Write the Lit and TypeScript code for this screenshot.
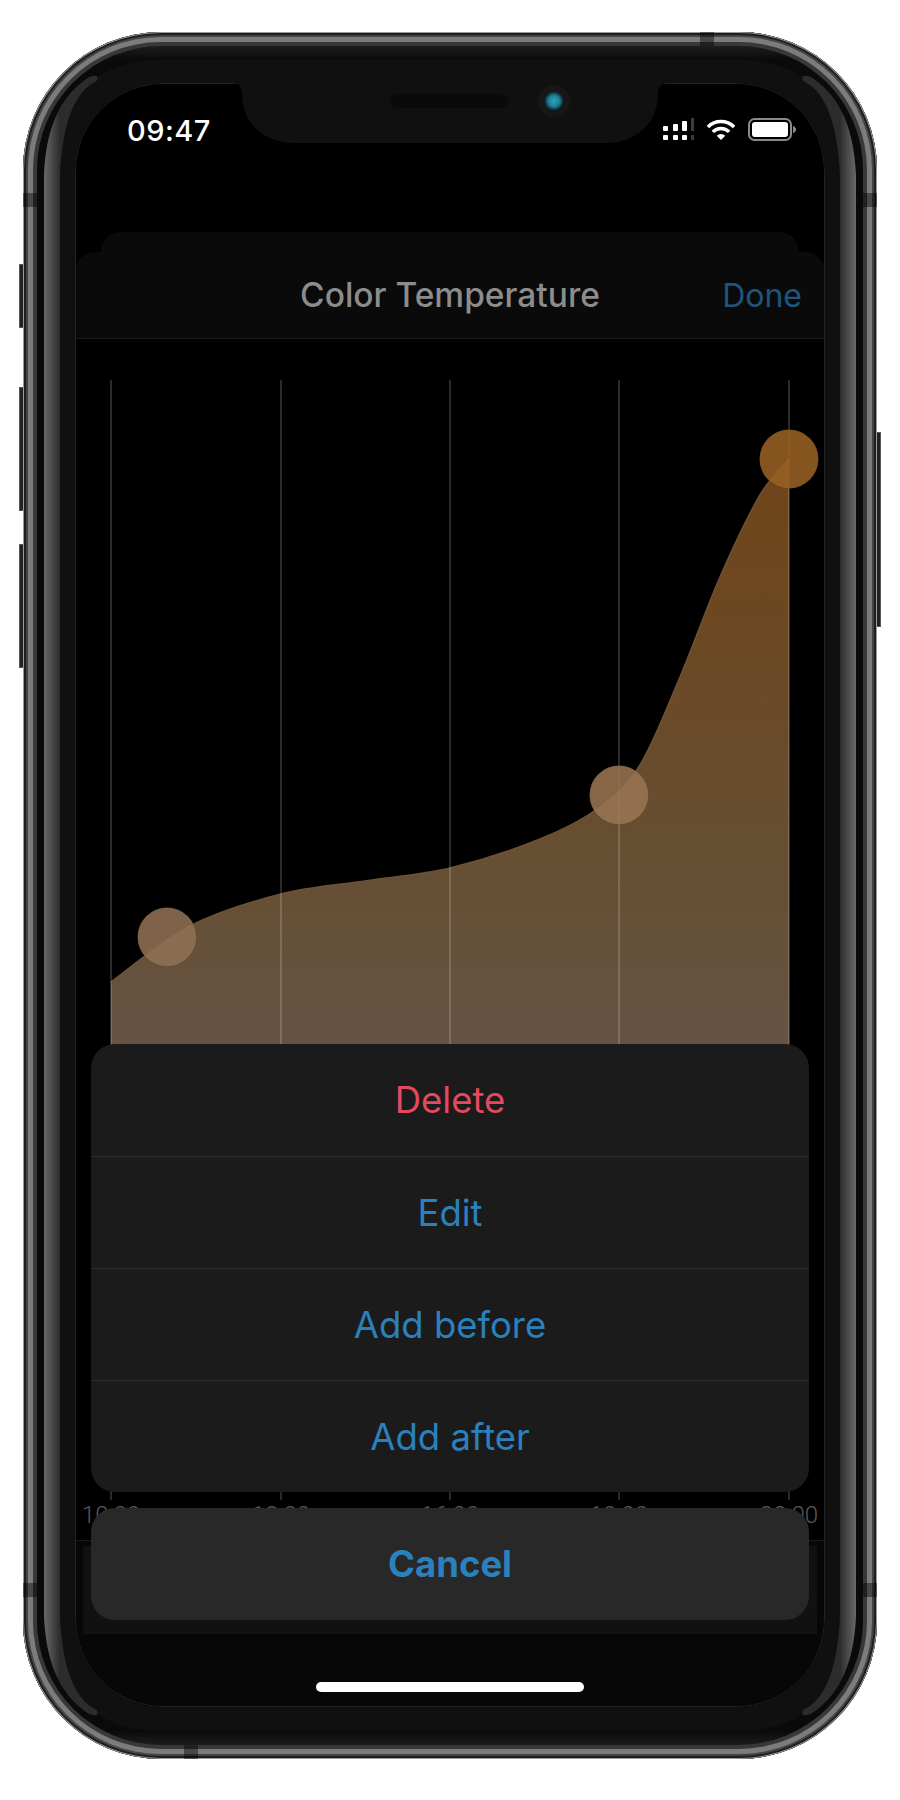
import { LitElement, html, css, svg } from "lit";
import { customElement } from "lit/decorators.js";

type Pt = [number, number];

// curve and grid are in page pixels, the chart svg's viewBox is offset to match
const CURVE: Pt[] = [
  [111, 982], [190, 926], [281, 894], [365, 881], [450, 868], [540, 839],
  [600, 807], [640, 765], [680, 677], [720, 577], [760, 495], [789, 459],
];
const GRID = [111, 281, 450, 619, 789];
const LABELS = ["10:00", "13:00", "16:00", "19:00", "22:00"];
const POINTS = [
  { x: 167, y: 937, fill: "#8f6f53" },
  { x: 619, y: 795, fill: "#987451" },
  { x: 789, y: 459, fill: "#996123" },
];

function smooth(pts: Pt[]) {
  let d = `M${pts[0][0]} ${pts[0][1]}`;
  for (let i = 0; i < pts.length - 1; i++) {
    const p0 = pts[Math.max(i - 1, 0)];
    const p1 = pts[i];
    const p2 = pts[i + 1];
    const p3 = pts[Math.min(i + 2, pts.length - 1)];
    const c1 = [p1[0] + (p2[0] - p0[0]) / 6, p1[1] + (p2[1] - p0[1]) / 6];
    const c2 = [p2[0] - (p3[0] - p1[0]) / 6, p2[1] - (p3[1] - p1[1]) / 6];
    d += ` C${c1[0]} ${c1[1]} ${c2[0]} ${c2[1]} ${p2[0]} ${p2[1]}`;
  }
  return d;
}

@customElement("app-root")
export class AppRoot extends LitElement {
  static override styles = css`
    :host {
      display: block;
      box-sizing: border-box;
      height: 1800px;
      padding: 32px 23px 0;
      background: #fff;
      font-family: Inter, "Liberation Sans", sans-serif;
    }
    .phone {
      position: relative;
      box-sizing: border-box;
      width: 854px;
      height: 1727px;
      padding: 14px;
      border-radius: 138px;
      background: #333;
      box-shadow: inset 0 0 0 1px #9a9a9a, inset 0 0 0 3px #1e1e1e,
        inset 0 0 0 5px #444, inset 0 0 0 10px #7c7c7c, inset 0 0 0 14px #383838;
    }
    .rim {
      height: 100%;
      box-sizing: border-box;
      padding: 14px 7px;
      border-radius: 124px;
      background: linear-gradient(#1d1d1d, #0a0a0a 14px, #0a0a0a calc(100% - 14px), #1d1d1d);
    }
    .bezel {
      height: 100%;
      box-sizing: border-box;
      padding: 23px 31px 24px;
      border-radius: 112px;
      background: #101010;
    }
    .screen {
      position: relative;
      display: flex;
      flex-direction: column;
      height: 1624px;
      border-radius: 88px;
      overflow: hidden;
      background: #000;
    }
    .screen::after {
      content: "";
      position: absolute;
      inset: 0;
      border: 1px solid #222;
      border-radius: 88px;
      pointer-events: none;
    }
    .strips {
      position: absolute;
      inset: 0;
      pointer-events: none;
    }
    .side-btn {
      position: absolute;
      left: -4px;
      width: 4px;
      box-sizing: border-box;
      background: #222;
      border: 1px solid #555;
      border-right: none;
    }
    .side-btn.right {
      left: auto;
      right: -4px;
      border: 1px solid #555;
      border-left: none;
    }
    .b1 { top: 232px; height: 64px; }
    .b2 { top: 355px; height: 124px; }
    .b3 { top: 512px; height: 124px; }
    .b4 { top: 400px; height: 195px; }
    .band {
      position: absolute;
      background: rgba(0, 0, 0, 0.42);
    }
    .band.v { width: 14px; height: 14px; }
    .b-lt { left: 0; top: 161px; }
    .b-rt { right: 0; top: 161px; }
    .b-lb { left: 0; top: 1551px; }
    .b-rb { right: 0; top: 1551px; }
    .b-t { left: 677px; top: 0; }
    .b-b { left: 161px; bottom: 0; }

    .notch {
      position: absolute;
      top: 0;
      left: 157px;
      z-index: 2;
    }
    .status {
      display: flex;
      align-items: flex-start;
      justify-content: space-between;
      box-sizing: border-box;
      height: 149px;
      padding: 32px 29px 0 52px;
      color: #fff;
      font-size: 29px;
      font-weight: 500;
      letter-spacing: 0.5px;
      line-height: 32px;
    }
    .status-icons {
      display: flex;
      gap: 12px;
      margin-top: 2px;
    }
    .back-card {
      height: 20px;
      margin: 0 26px;
      border-radius: 20px 20px 0 0;
      background: #0a0a0a;
    }
    .header {
      display: grid;
      grid-template-columns: 1fr auto 1fr;
      align-items: center;
      box-sizing: border-box;
      height: 87px;
      padding: 0 23px;
      border-bottom: 1px solid #1a1a1a;
      border-radius: 20px 20px 0 0;
      background: #0a0a0a;
      font-size: 32px;
    }
    .title {
      grid-column: 2;
      color: #8c8c8c;
      font-size: 33.5px;
      font-weight: 500;
    }
    .done {
      justify-self: end;
      color: #1d557d;
    }
    .chart {
      display: block;
      flex: none;
    }
    .chart text {
      fill: #5a5a5a;
      font-family: Roboto, "Liberation Sans", sans-serif;
      font-size: 24px;
      font-weight: 300;
      text-anchor: middle;
    }
    .footer {
      display: flex;
      flex-direction: column;
      align-items: center;
      flex: 1;
      padding: 5px 8px 0;
      border-top: 1px solid #1a1a1a;
      background: #070707;
    }
    .footer-inner {
      align-self: stretch;
      height: 88px;
      background: #111;
    }
    .home {
      width: 268px;
      height: 10px;
      margin-top: 48px;
      border-radius: 5px;
      background: #fff;
    }
    .actions {
      position: absolute;
      top: 961px;
      left: 16px;
      right: 16px;
      display: flex;
      flex-direction: column;
      gap: 16px;
      z-index: 1;
    }
    .group {
      border-radius: 24px;
      background: #1b1b1b;
    }
    .row {
      display: flex;
      align-items: center;
      justify-content: center;
      box-sizing: border-box;
      height: 112px;
      color: #2a81bd;
      font-size: 36.5px;
    }
    .row + .row {
      border-top: 1px solid #2e2e2e;
    }
    .row.danger {
      color: #e6485f;
    }
    .cancel {
      background: #282828;
    }
    .cancel .row {
      font-weight: 700;
    }
  `;

  private strip() {
    return svg`
      <path fill="url(#strip)" d="M97 76 Q99 81 93 83 C74 94 62 125 60 175 L60 1616 C62 1666 74 1697 93 1708 Q99 1710 97 1715 Q91 1716 86 1712 C58 1692 46 1660 44 1616 L44 175 C46 131 58 99 86 79 Q91 75 97 76 Z" />
    `;
  }

  private renderStrips() {
    return html`<svg class="strips" width="854" height="1727" viewBox="23 32 854 1727">
      <defs>
        <linearGradient id="strip" gradientUnits="userSpaceOnUse" x1="44" y1="0" x2="60" y2="0">
          <stop offset="0" stop-color="#686868" />
          <stop offset="1" stop-color="#2c2c2c" />
        </linearGradient>
      </defs>
      ${this.strip()}
      <g transform="translate(900 0) scale(-1 1)">${this.strip()}</g>
    </svg>`;
  }

  private renderNotch() {
    return html`<svg class="notch" width="436" height="60" viewBox="232 83 436 60">
      <defs>
        <radialGradient id="lens">
          <stop offset="0" stop-color="#2fa3b8" />
          <stop offset="0.55" stop-color="#1f8196" />
          <stop offset="1" stop-color="#04151b" />
        </radialGradient>
      </defs>
      <path fill="#101010" d="M232 83 Q242 83 242 95 C243 125 265 143 295 143 L605 143 C635 143 657 125 658 95 Q658 83 668 83 Z" />
      <rect x="390" y="94" width="118" height="14" rx="7" fill="#0a0a0a" />
      <circle cx="554" cy="101" r="16" fill="#171717" />
      <circle cx="554" cy="101" r="10" fill="url(#lens)" />
    </svg>`;
  }

  private renderStatusIcons() {
    return html`<div class="status-icons">
      <svg width="31" height="24" viewBox="0 0 31 24" fill="#fff">
        <rect x="0" y="9" width="5" height="5" rx="1" />
        <rect x="10" y="7" width="5" height="7" rx="1" />
        <rect x="19" y="4" width="5" height="10" rx="1" />
        <rect x="28" y="1" width="5" height="13" rx="1" fill="#3c3c3c" />
        <rect x="0" y="18" width="5" height="5" rx="1" />
        <rect x="10" y="18" width="5" height="5" rx="1" />
        <rect x="19" y="18" width="5" height="5" rx="1" />
        <rect x="28" y="18" width="5" height="5" rx="1" fill="#3c3c3c" />
      </svg>
      <svg width="30" height="24" viewBox="0 0 30 24">
        <path fill="none" stroke="#fff" stroke-width="3.5" d="M1.92 9.92 A18.5 18.5 0 0 1 28.08 9.92" />
        <path fill="none" stroke="#fff" stroke-width="3.5" d="M6.87 14.87 A11.5 11.5 0 0 1 23.13 14.87" />
        <path fill="#fff" d="M15 23 L10.76 18.76 A6 6 0 0 1 19.24 18.76 Z" />
      </svg>
      <svg width="48" height="24" viewBox="0 0 48 24">
        <rect x="1" y="2" width="42" height="21" rx="5.5" fill="none" stroke="#8a8a8a" stroke-width="2" />
        <rect x="4" y="5" width="36" height="15" rx="3" fill="#fff" />
        <path fill="#8a8a8a" d="M45 9 C47 9.5 48 11 48 12.500 C48 14 47 15.500 45 16 Z" />
      </svg>
    </div>`;
  }

  private renderChart() {
    const line = smooth(CURVE);
    return html`<svg class="chart" width="750" height="1201" viewBox="75 339 750 1201">
      <defs>
        <linearGradient id="area" gradientUnits="userSpaceOnUse" x1="0" y1="459" x2="0" y2="1040">
          <stop offset="0" stop-color="#6f4518" />
          <stop offset="0.42" stop-color="#6a4a28" />
          <stop offset="0.76" stop-color="#655036" />
          <stop offset="1" stop-color="#665343" />
        </linearGradient>
      </defs>
      <path fill="url(#area)" d="${line} L789 1490 L111 1490 Z" />
      <path fill="none" stroke="#6f5236" stroke-width="1.5" d=${line} />
      ${GRID.map(
        (x) => svg`<line x1=${x} x2=${x} y1="380" y2="1500" stroke="#fff" stroke-opacity="0.22" stroke-width="1.5" />`
      )}
      ${GRID.map(
        (x, i) => svg`<text x=${x} y="1523">${LABELS[i]}</text>`
      )}
      ${POINTS.map(
        (p) => svg`<circle cx=${p.x} cy=${p.y} r="29.500" fill=${p.fill} fill-opacity="0.88" stroke="#000" stroke-opacity="0.12" stroke-width="1" />`
      )}
    </svg>`;
  }

  override render() {
    return html`
      <div class="phone">
        <div class="side-btn b1"></div>
        <div class="side-btn b2"></div>
        <div class="side-btn b3"></div>
        <div class="side-btn right b4"></div>
        <div class="rim">
          <div class="bezel">
            <div class="screen">
              ${this.renderNotch()}
              <div class="status">
                <span>09:47</span>
                ${this.renderStatusIcons()}
              </div>
              <div class="back-card"></div>
              <div class="header">
                <span class="title">Color Temperature</span>
                <span class="done">Done</span>
              </div>
              ${this.renderChart()}
              <div class="footer">
                <div class="footer-inner"></div>
                <div class="home"></div>
              </div>
              <div class="actions">
                <div class="group">
                  <div class="row danger">Delete</div>
                  <div class="row">Edit</div>
                  <div class="row">Add before</div>
                  <div class="row">Add after</div>
                </div>
                <div class="group cancel">
                  <div class="row">Cancel</div>
                </div>
              </div>
            </div>
          </div>
        </div>
        ${this.renderStrips()}
        <div class="band v b-lt"></div>
        <div class="band v b-rt"></div>
        <div class="band v b-lb"></div>
        <div class="band v b-rb"></div>
        <div class="band v b-t"></div>
        <div class="band v b-b"></div>
      </div>
    `;
  }
}
